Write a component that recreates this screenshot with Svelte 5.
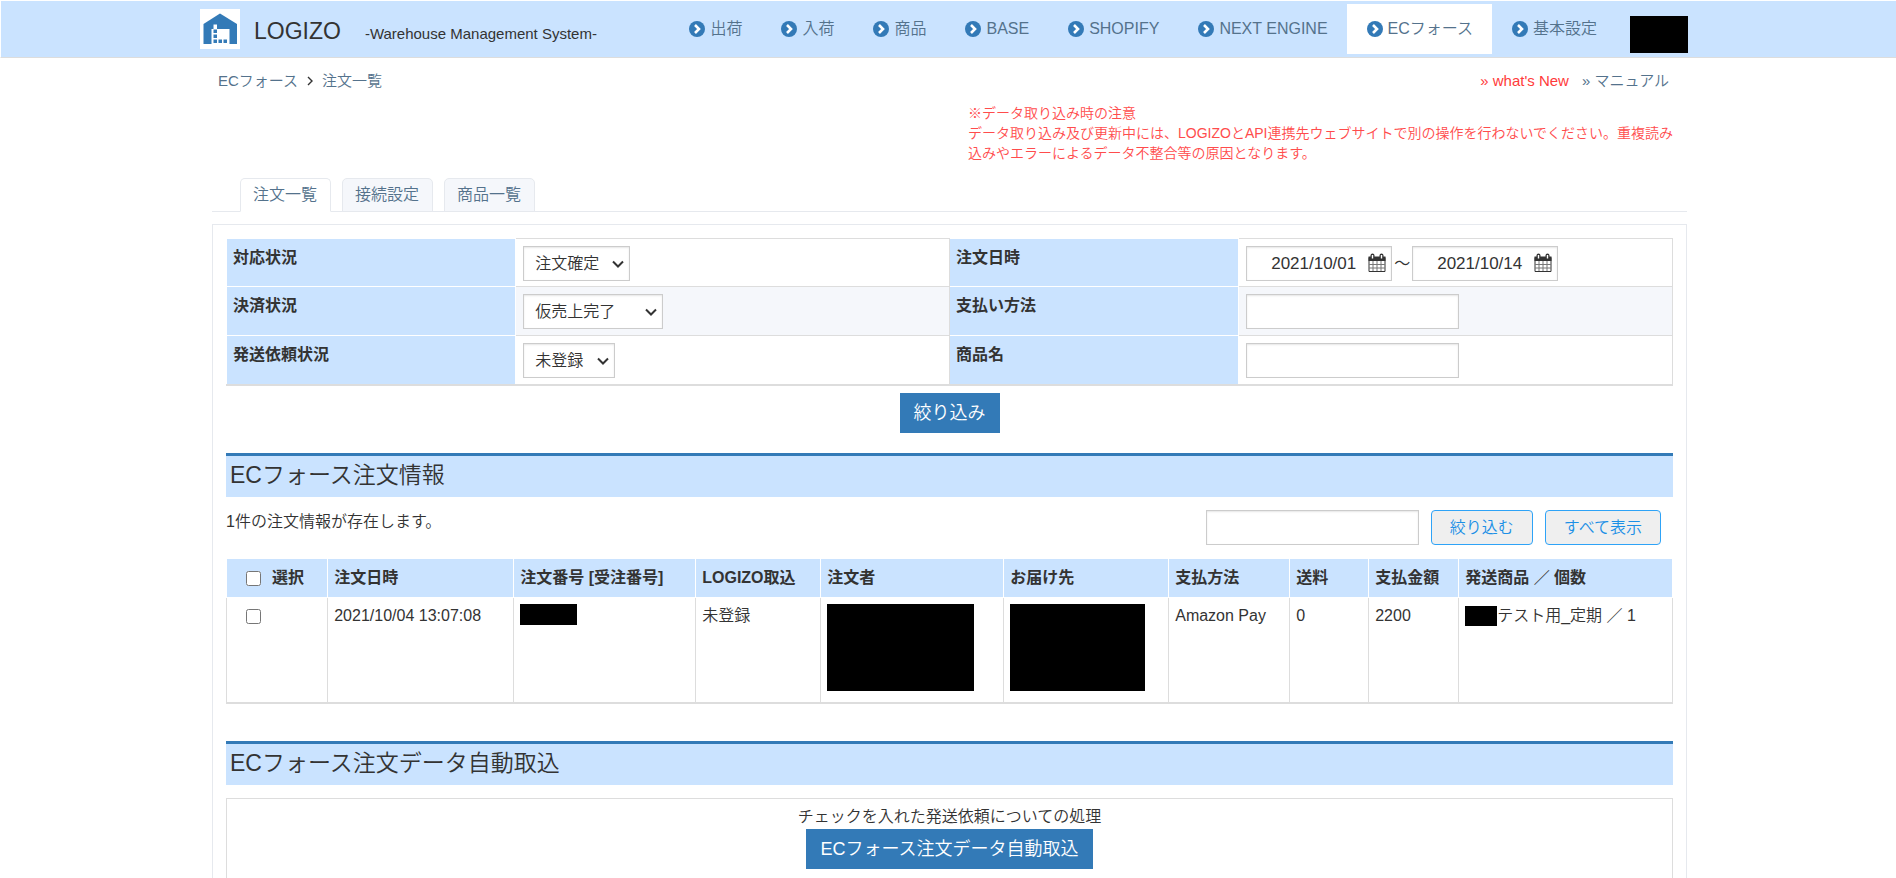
<!-- App.svelte -->
<script>
    const menu = ['出荷', '入荷', '商品', 'BASE', 'SHOPIFY', 'NEXT ENGINE', 'ECフォース', '基本設定'];
    const tabs = ['注文一覧', '接続設定', '商品一覧'];

    const orders = [
        {
            date: '2021/10/04 13:07:08',
            status: '未登録',
            payment: 'Amazon Pay',
            shipping: '0',
            total: '2200',
            item: 'テスト用_定期 ／ 1'
        }
    ];

    let activeMenu = 'ECフォース';
    let activeTab = '注文一覧';
    let dateFrom = '2021/10/01';
    let dateTo = '2021/10/14';
    let paymentMethod = '';
    let productName = '';
    let keyword = '';
    let selected = orders.map(() => false);

    $: allSelected = selected.every(Boolean);

    function toggleAll() {
        const next = !allSelected;
        selected = selected.map(() => next);
    }

    function showAll() {
        keyword = '';
    }
</script>

{#snippet calendar()}
    <svg class="calendar" viewBox="0 0 18 20" aria-hidden="true">
        <path d="M1 4.5h16v14H1z" fill="#fff" stroke="#333" />
        <path d="M0.5 3.5h17v4.5h-17z" fill="#333" />
        <path d="M4.5 2.5v2.5M13.5 2.5v2.5" stroke="#333" stroke-width="4" stroke-linecap="round" />
        <path d="M4.5 2v3.5M13.5 2v3.5" stroke="#fff" stroke-width="1.4" />
        <path d="M5 8v10M9 8v10M13 8v10M1 11.5h16M1 15h16" stroke="#777" stroke-width="1" fill="none" />
    </svg>
{/snippet}

{#snippet arrow()}
    <svg class="arrow" viewBox="0 0 12 8" aria-hidden="true">
        <path d="M1 1.500l5 5 5-5" fill="none" stroke="#333" stroke-width="2" />
    </svg>
{/snippet}

<header class="navbar">
    <div class="navbar-inner">
        <a class="brand" href="#home">
            <svg class="logo" viewBox="0 0 40 40" aria-hidden="true">
                <path d="M0 0h40v40H0z" fill="#fff" />
                <path d="M20 4.500 37 15v20H3.500V15z" fill="#337ab7" />
                <path d="M11.500 20h18v15h-18z" fill="#fff" />
                <path d="M13.500 15.500h3.500v5h-3.500z" fill="#fff" />
                <path d="M13.500 20.500h3.500v3.500h-3.500zM13.500 25.500h3.500v3.500h-3.500zM13.500 30.500h3.500v3.500h-3.500zM18.500 30.500h3.500v3.500h-3.500zM23.500 30.500h3.500v3.500h-3.500z" fill="#337ab7" />
            </svg>
            <span class="name">LOGIZO</span>
            <span class="tagline">-Warehouse Management System-</span>
        </a>
        <nav class="menu">
            {#each menu as label}
                <a href="#menu" class:active={label === activeMenu} on:click={() => (activeMenu = label)}>
                    <svg class="chevron" viewBox="0 0 16 16" aria-hidden="true">
                        <circle cx="8" cy="8" r="8" fill="#337ab7" />
                        <path d="M6 4l4 4-4 4" fill="none" stroke="#fff" stroke-width="2.6" />
                    </svg>
                    {label}
                </a>
            {/each}
        </nav>
        <div class="mask account"></div>
    </div>
</header>

<main class="page">
    <div class="topline">
        <div class="breadcrumb">
            <a href="#ecforce">ECフォース</a>
            <svg class="separator" viewBox="0 0 6 10" aria-hidden="true">
                <path d="M1 1l4 4-4 4" fill="none" stroke="#333" stroke-width="1.4" />
            </svg>
            <a href="#orders">注文一覧</a>
        </div>
        <div class="links">
            <a class="new" href="#new">» what's New</a>
            <a href="#manual">» マニュアル</a>
        </div>
    </div>

    <p class="notice">
        ※データ取り込み時の注意<br />
        データ取り込み及び更新中には、LOGIZOとAPI連携先ウェブサイトで別の操作を行わないでください。重複読み込みやエラーによるデータ不整合等の原因となります。
    </p>

    <div class="tabs">
        {#each tabs as tab}
            <a href="#tab" class:active={tab === activeTab} on:click={() => (activeTab = tab)}>{tab}</a>
        {/each}
    </div>

    <div class="panel">
        <table class="filter">
            <tbody>
                <tr>
                    <th><label for="state">対応状況</label></th>
                    <td>
                        <div class="select w-state">
                            <select id="state">
                                <option>注文確定</option>
                            </select>
                            {@render arrow()}
                        </div>
                    </td>
                    <th><label for="date-from">注文日時</label></th>
                    <td>
                        <div class="range">
                            <span class="date">
                                <input id="date-from" type="text" bind:value={dateFrom} />
                                {@render calendar()}
                            </span>
                            <span class="tilde">～</span>
                            <span class="date">
                                <input type="text" aria-label="注文日時" bind:value={dateTo} />
                                {@render calendar()}
                            </span>
                        </div>
                    </td>
                </tr>
                <tr>
                    <th><label for="settlement">決済状況</label></th>
                    <td>
                        <div class="select w-settlement">
                            <select id="settlement">
                                <option>仮売上完了</option>
                            </select>
                            {@render arrow()}
                        </div>
                    </td>
                    <th><label for="method">支払い方法</label></th>
                    <td><input id="method" type="text" bind:value={paymentMethod} /></td>
                </tr>
                <tr>
                    <th><label for="request">発送依頼状況</label></th>
                    <td>
                        <div class="select w-request">
                            <select id="request">
                                <option>未登録</option>
                            </select>
                            {@render arrow()}
                        </div>
                    </td>
                    <th><label for="product">商品名</label></th>
                    <td><input id="product" type="text" bind:value={productName} /></td>
                </tr>
            </tbody>
        </table>
        <div class="actions">
            <button class="primary" type="button">絞り込み</button>
        </div>

        <h2>ECフォース注文情報</h2>
        <div class="toolbar">
            <p>{orders.length}件の注文情報が存在します。</p>
            <div class="search">
                <input type="text" aria-label="絞り込む" bind:value={keyword} />
                <button class="outline" type="button">絞り込む</button>
                <button class="outline" type="button" on:click={showAll}>すべて表示</button>
            </div>
        </div>

        <table class="orders">
            <colgroup>
                <col class="c-check" />
                <col class="c-date" />
                <col class="c-number" />
                <col class="c-status" />
                <col class="c-orderer" />
                <col class="c-dest" />
                <col class="c-payment" />
                <col class="c-shipping" />
                <col class="c-total" />
                <col />
            </colgroup>
            <thead>
                <tr>
                    <th>
                        <label class="check">
                            <input type="checkbox" checked={allSelected} on:change={toggleAll} />
                            選択
                        </label>
                    </th>
                    <th>注文日時</th>
                    <th>注文番号 [受注番号]</th>
                    <th>LOGIZO取込</th>
                    <th>注文者</th>
                    <th>お届け先</th>
                    <th>支払方法</th>
                    <th>送料</th>
                    <th>支払金額</th>
                    <th>発送商品 ／ 個数</th>
                </tr>
            </thead>
            <tbody>
                {#each orders as order, i}
                    <tr>
                        <td>
                            <div class="check">
                                <input type="checkbox" aria-label="選択" bind:checked={selected[i]} />
                            </div>
                        </td>
                        <td>{order.date}</td>
                        <td><div class="mask number"></div></td>
                        <td>{order.status}</td>
                        <td><div class="mask orderer"></div></td>
                        <td><div class="mask dest"></div></td>
                        <td>{order.payment}</td>
                        <td>{order.shipping}</td>
                        <td>{order.total}</td>
                        <td>
                            <div class="item"><span class="mask code"></span>{order.item}</div>
                        </td>
                    </tr>
                {/each}
            </tbody>
        </table>

        <h2>ECフォース注文データ自動取込</h2>
        <div class="import">
            <p>チェックを入れた発送依頼についての処理</p>
            <button class="primary" type="button">ECフォース注文データ自動取込</button>
        </div>
    </div>
</main>

<style>
    :global(body) {
        background-color: #fff;
        color: #333;
        font-family: 'Liberation Sans', 'Noto Sans CJK JP', sans-serif;
        font-size: 16px;
        font-weight: 350;
        line-height: 24px;
        overflow: hidden;
    }

    * {
        box-sizing: border-box;
    }

    a {
        color: #54728c;
        text-decoration: none;
    }

    p {
        margin: 0;
    }

    input,
    select,
    button {
        font: inherit;
        color: inherit;
        margin: 0;
    }

    .mask {
        background-color: #000;
    }

    .navbar {
        background-color: #cae3ff;
        border-top: 1px solid #fff;
        border-left: 1px solid #fff;
        border-bottom: 1px solid #ddd;
        height: 58px;
        padding: 0 208px 0 199px;
    }

    .navbar-inner {
        display: flex;
        height: 100%;
    }

    .brand {
        display: flex;
        align-items: center;
        color: #333;
        white-space: nowrap;
    }

    .logo {
        width: 40px;
        height: 40px;
    }

    .name {
        font-size: 23px;
        margin: 4px 24px 0 14px;
    }

    .tagline {
        margin-top: 9px;
        font-size: 15px;
    }

    .menu {
        display: flex;
        margin-left: auto;
        padding: 3px 0;
    }

    .menu a {
        display: flex;
        align-items: center;
        gap: 5px;
        padding: 0 19px 0 20px;
        white-space: nowrap;
    }

    .menu a.active {
        background-color: #fff;
    }

    .chevron {
        width: 16px;
        height: 16px;
    }

    .account {
        width: 58px;
        height: 37px;
        margin: 15px 0 0 14px;
    }

    .page {
        padding: 0 209px 0 212px;
    }

    .topline {
        display: flex;
        justify-content: space-between;
        font-size: 15px;
        padding: 11px 18px 0 6px;
    }

    .breadcrumb {
        display: flex;
        align-items: center;
        gap: 9px;
    }

    .separator {
        width: 6px;
        height: 10px;
    }

    .links {
        display: flex;
        gap: 13px;
    }

    .links .new {
        color: #ff3b3b;
    }

    .notice {
        width: 708px;
        margin: 10px 11px 15px auto;
        color: #ff4c4c;
        font-size: 14px;
        line-height: 20px;
    }

    .tabs {
        display: flex;
        gap: 11px;
        padding-left: 28px;
        border-bottom: 1px solid #e6e9ee;
    }

    .tabs a {
        height: 34px;
        margin-bottom: -1px;
        padding: 4px 13px 4px 12px;
        border: 1px solid #e6e9ee;
        border-radius: 5px 5px 0 0;
        background-color: #f5f7fb;
    }

    .tabs a.active {
        border-bottom-color: #fff;
        background-color: #fff;
    }

    .panel {
        margin-top: 12px;
        padding: 13px;
        border: 1px solid #e6e9ee;
    }

    table {
        width: 100%;
        border-collapse: collapse;
        table-layout: fixed;
        border-bottom: 2px solid #ddd;
    }

    th,
    td {
        padding: 6px;
        text-align: left;
        vertical-align: top;
    }

    th {
        padding-top: 7px;
        background-color: #cae3ff;
        border: 1px solid #fff;
        font-weight: bold;
    }

    td {
        border: 1px solid #ddd;
    }

    .filter th {
        width: 20%;
    }

    .filter td {
        width: 30%;
        padding: 7px 7px 6px;
    }

    .filter tr:first-child td {
        padding-bottom: 5px;
    }

    .filter tr:nth-child(even) td {
        background-color: #f5f7fb;
    }

    select,
    input[type='text'] {
        display: block;
        height: 35px;
        border: 1px solid #ccc;
        border-radius: 0;
        background-color: #fff;
        box-shadow: inset 0 1px 2px rgba(0, 0, 0, 0.1);
    }

    .select {
        position: relative;
    }

    select {
        appearance: none;
        width: 100%;
        padding: 0 11px;
        outline: none;
    }

    .arrow {
        position: absolute;
        top: 14px;
        right: 6px;
        width: 12px;
        height: 8px;
        pointer-events: none;
    }

    input[type='text'] {
        width: 213px;
        padding: 0 8px;
    }

    .w-state {
        width: 107px;
    }

    .w-settlement {
        width: 140px;
    }

    .w-request {
        width: 92px;
    }

    .range {
        display: flex;
        align-items: center;
    }

    .date {
        display: flex;
        position: relative;
    }

    .date input[type='text'] {
        width: 146px;
        padding: 0 32px 0 24px;
        font-size: 17px;
    }

    .calendar {
        position: absolute;
        top: 7px;
        right: 6px;
        width: 18px;
        height: 20px;
    }

    .tilde {
        width: 20px;
        text-align: center;
    }

    .actions {
        display: flex;
        justify-content: center;
        padding: 7px 0 20px;
    }

    .primary {
        height: 40px;
        padding: 0 14px;
        border: 0;
        background-color: #337ab7;
        color: #fff;
        font-size: 18px;
        cursor: pointer;
    }

    h2 {
        height: 44px;
        margin: 0;
        padding: 3px 4px;
        border-top: 3px solid #337ab7;
        background-color: #cae3ff;
        font-size: 23px;
        font-weight: 350;
        line-height: 32px;
    }

    .toolbar {
        display: flex;
        justify-content: space-between;
        padding: 13px 12px 13px 0;
    }

    .search {
        display: flex;
        gap: 12px;
    }

    .outline {
        height: 35px;
        padding: 0 18px;
        border: 1px solid #2ea3f7;
        border-radius: 4px;
        background-color: #efefef;
        color: #1c90e6;
        cursor: pointer;
    }

    .orders {
        margin-bottom: 37px;
    }

    .orders th {
        height: 39px;
    }

    .orders td {
        height: 105px;
    }

    .c-check {
        width: 7%;
    }

    .c-date {
        width: 186px;
    }

    .c-number {
        width: 182px;
    }

    .c-status {
        width: 125px;
    }

    .c-orderer {
        width: 183px;
    }

    .c-dest {
        width: 165px;
    }

    .c-payment {
        width: 121px;
    }

    .c-shipping {
        width: 79px;
    }

    .c-total {
        width: 90px;
    }

    .check {
        display: flex;
        align-items: center;
        gap: 11px;
        height: 24px;
        padding-left: 13px;
    }

    .check input {
        width: 15px;
        height: 15px;
    }

    .number {
        width: 57px;
        height: 21px;
    }

    .orderer {
        width: 147px;
        height: 87px;
    }

    .dest {
        width: 135px;
        height: 87px;
    }

    .item {
        display: flex;
        align-items: center;
        white-space: nowrap;
    }

    .code {
        width: 32px;
        height: 20px;
    }

    .import {
        display: flex;
        flex-direction: column;
        align-items: center;
        margin-top: 13px;
        padding: 6px 0 12px;
        border: 1px solid #ddd;
    }
</style>
